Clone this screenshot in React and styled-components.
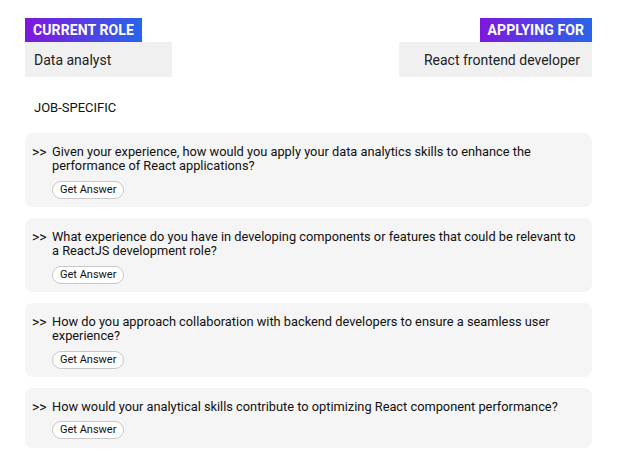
import styled, { createGlobalStyle } from "styled-components"

const GlobalStyle = createGlobalStyle`
  body {
    margin: 0;
    background: #ffffff;
    font-family: Roboto, "Liberation Sans", sans-serif;
    color: #111;
  }
`

const Page = styled.div`
  padding: 18px 25px 16px;
`

const Header = styled.div`
  display: flex;
  justify-content: space-between;
`

const RoleColumn = styled.div`
  display: flex;
  flex-direction: column;
  align-items: ${(p) => (p.$right ? "flex-end" : "flex-start")};
`

const RoleLabel = styled.div`
  background: linear-gradient(to right, #7f17dd, #2865ea);
  color: #fff;
  font-weight: 700;
  font-size: 14px;
  line-height: 16px;
  padding: 4px 8px;
  letter-spacing: 0.1px;
`

const RoleValue = styled.div`
  background: #f0f0f0;
  width: ${(p) => p.$width}px;
  height: 35px;
  box-sizing: border-box;
  display: flex;
  align-items: center;
  justify-content: ${(p) => (p.$right ? "flex-end" : "flex-start")};
  padding: ${(p) => (p.$right ? "0 12px 0 0" : "0 0 0 9px")};
  font-size: 14px;
  color: #222;
`

const SectionTitle = styled.div`
  margin: 23px 0 17px 9px;
  font-size: 13px;
  line-height: 16px;
  font-weight: 400;
  color: #111;
`

const QuestionList = styled.div`
  display: flex;
  flex-direction: column;
  gap: 11px;
`

const Card = styled.div`
  background: #f5f5f5;
  border-radius: 8px;
  padding: 11.5px 12px 8.5px 7px;
`

const QuestionRow = styled.div`
  display: flex;
  align-items: flex-start;
`

const Chevrons = styled.span`
  width: 20px;
  flex: none;
  font-size: 14px;
  line-height: 14.5px;
  color: #111;
`

const QuestionText = styled.div`
  font-size: 12.8px;
  line-height: 14.5px;
  color: #111;
`

const AnswerButton = styled.button`
  display: block;
  margin: 7px 0 0 20px;
  height: 18px;
  padding: 0 7px;
  border: 1px solid #c8c8c8;
  border-radius: 9px;
  background: #fff;
  font-family: Roboto, "Liberation Sans", sans-serif;
  font-size: 11px;
  line-height: 16px;
  color: #111;
  cursor: pointer;
`

const questions = [
  "Given your experience, how would you apply your data analytics skills to enhance the performance of React applications?",
  "What experience do you have in developing components or features that could be relevant to a ReactJS development role?",
  "How do you approach collaboration with backend developers to ensure a seamless user experience?",
  "How would your analytical skills contribute to optimizing React component performance?",
]

const App = () => {
  return (
    <>
      <GlobalStyle />
      <Page>
        <Header>
          <RoleColumn>
            <RoleLabel>CURRENT ROLE</RoleLabel>
            <RoleValue $width={147}>Data analyst</RoleValue>
          </RoleColumn>
          <RoleColumn $right>
            <RoleLabel>APPLYING FOR</RoleLabel>
            <RoleValue $width={193} $right>React frontend developer</RoleValue>
          </RoleColumn>
        </Header>
        <SectionTitle>JOB-SPECIFIC</SectionTitle>
        <QuestionList>
          {questions.map((q) => (
            <Card key={q}>
              <QuestionRow>
                <Chevrons>&gt;&gt;</Chevrons>
                <QuestionText>{q}</QuestionText>
              </QuestionRow>
              <AnswerButton>Get Answer</AnswerButton>
            </Card>
          ))}
        </QuestionList>
      </Page>
    </>
  )
}

export default App
